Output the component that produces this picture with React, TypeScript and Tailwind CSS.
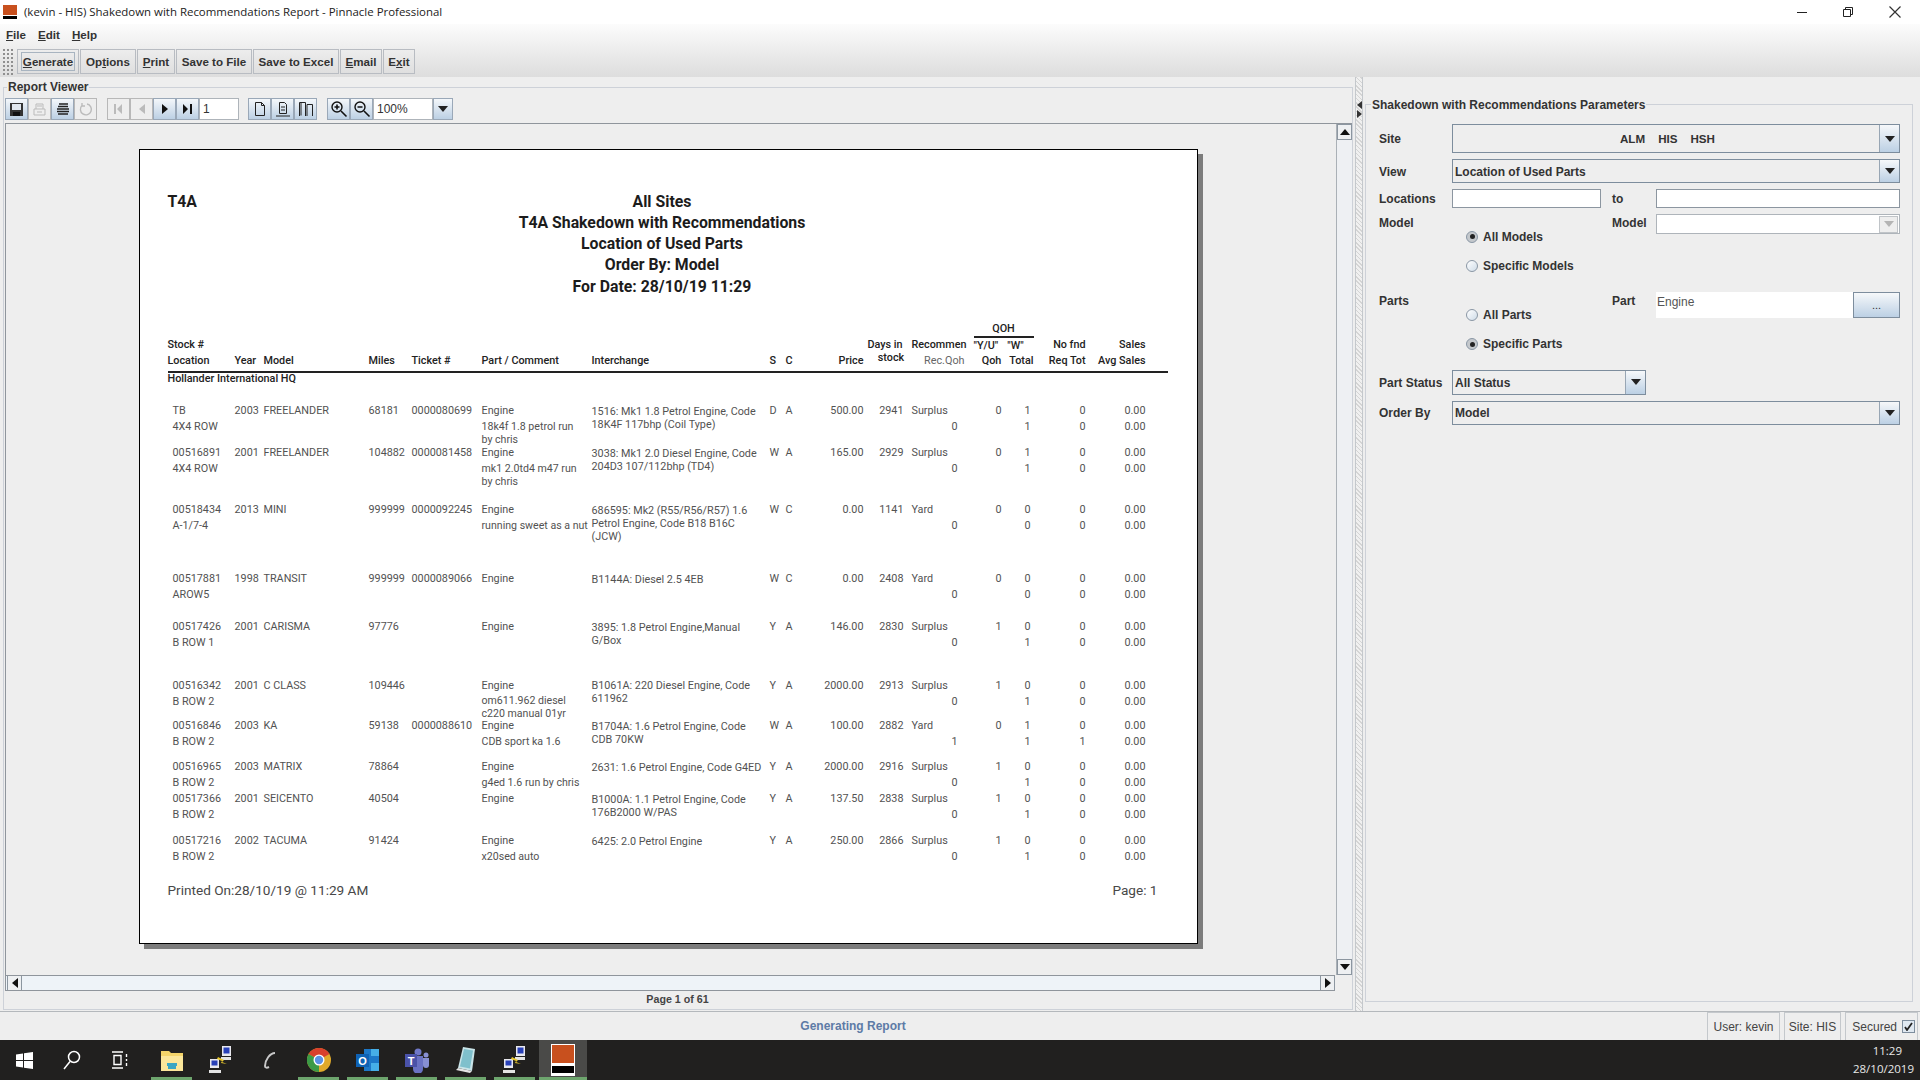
import React from "react";

type Row = {
    h: string;
    stock: string;
    loc: string;
    year: string;
    model: string;
    miles: string;
    ticket: string;
    comment: string[];
    inter: string[];
    s: string;
    c: string;
    price: string;
    days: string;
    rec: string;
    recQ: string;
    qoh: string;
    t1: string;
    t2: string;
    n1: string;
    n2: string;
};

const rows: Row[] = [
    { h: "h-[42px]", stock: "TB", loc: "4X4 ROW", year: "2003", model: "FREELANDER", miles: "68181", ticket: "0000080699", comment: ["18k4f 1.8 petrol run", "by chris"], inter: ["1516: Mk1 1.8 Petrol Engine, Code", "18K4F 117bhp (Coil Type)"], s: "D", c: "A", price: "500.00", days: "2941", rec: "Surplus", recQ: "0", qoh: "0", t1: "1", t2: "1", n1: "0", n2: "0" },
    { h: "h-[57px]", stock: "00516891", loc: "4X4 ROW", year: "2001", model: "FREELANDER", miles: "104882", ticket: "0000081458", comment: ["mk1 2.0td4 m47 run", "by chris"], inter: ["3038: Mk1 2.0 Diesel Engine, Code", "204D3 107/112bhp (TD4)"], s: "W", c: "A", price: "165.00", days: "2929", rec: "Surplus", recQ: "0", qoh: "0", t1: "1", t2: "1", n1: "0", n2: "0" },
    { h: "h-[69px]", stock: "00518434", loc: "A-1/7-4", year: "2013", model: "MINI", miles: "999999", ticket: "0000092245", comment: ["running sweet as a nut"], inter: ["686595: Mk2 (R55/R56/R57) 1.6", "Petrol Engine, Code B18 B16C", "(JCW)"], s: "W", c: "C", price: "0.00", days: "1141", rec: "Yard", recQ: "0", qoh: "0", t1: "0", t2: "0", n1: "0", n2: "0" },
    { h: "h-[48px]", stock: "00517881", loc: "AROW5", year: "1998", model: "TRANSIT", miles: "999999", ticket: "0000089066", comment: [], inter: ["B1144A: Diesel 2.5 4EB"], s: "W", c: "C", price: "0.00", days: "2408", rec: "Yard", recQ: "0", qoh: "0", t1: "0", t2: "0", n1: "0", n2: "0" },
    { h: "h-[58.5px]", stock: "00517426", loc: "B ROW 1", year: "2001", model: "CARISMA", miles: "97776", ticket: "", comment: [], inter: ["3895: 1.8 Petrol Engine,Manual", "G/Box"], s: "Y", c: "A", price: "146.00", days: "2830", rec: "Surplus", recQ: "0", qoh: "1", t1: "0", t2: "1", n1: "0", n2: "0" },
    { h: "h-[40.5px]", stock: "00516342", loc: "B ROW 2", year: "2001", model: "C CLASS", miles: "109446", ticket: "", comment: ["om611.962 diesel", "c220 manual 01yr"], inter: ["B1061A: 220 Diesel Engine, Code", "611962"], s: "Y", c: "A", price: "2000.00", days: "2913", rec: "Surplus", recQ: "0", qoh: "1", t1: "0", t2: "1", n1: "0", n2: "0" },
    { h: "h-[41px]", stock: "00516846", loc: "B ROW 2", year: "2003", model: "KA", miles: "59138", ticket: "0000088610", comment: ["CDB sport ka 1.6"], inter: ["B1704A: 1.6 Petrol Engine, Code", "CDB 70KW"], s: "W", c: "A", price: "100.00", days: "2882", rec: "Yard", recQ: "1", qoh: "0", t1: "1", t2: "1", n1: "0", n2: "1" },
    { h: "h-[32px]", stock: "00516965", loc: "B ROW 2", year: "2003", model: "MATRIX", miles: "78864", ticket: "", comment: ["g4ed 1.6 run by chris"], inter: ["2631: 1.6 Petrol Engine, Code G4ED"], s: "Y", c: "A", price: "2000.00", days: "2916", rec: "Surplus", recQ: "0", qoh: "1", t1: "0", t2: "1", n1: "0", n2: "0" },
    { h: "h-[42px]", stock: "00517366", loc: "B ROW 2", year: "2001", model: "SEICENTO", miles: "40504", ticket: "", comment: [], inter: ["B1000A: 1.1 Petrol Engine, Code", "176B2000 W/PAS"], s: "Y", c: "A", price: "137.50", days: "2838", rec: "Surplus", recQ: "0", qoh: "1", t1: "0", t2: "1", n1: "0", n2: "0" },
    { h: "h-[42px]", stock: "00517216", loc: "B ROW 2", year: "2002", model: "TACUMA", miles: "91424", ticket: "", comment: ["x20sed auto"], inter: ["6425: 2.0 Petrol Engine"], s: "Y", c: "A", price: "250.00", days: "2866", rec: "Surplus", recQ: "0", qoh: "1", t1: "0", t2: "1", n1: "0", n2: "0" },
];

const cols = "grid grid-cols-[67px_29px_105px_43px_70px_110px_178px_16px_26px_52px_42px_59px_37px_29px_55px_60px]";

const ReportRow = ({ r }: { r: Row }) => (
    <div className={`${cols} ${r.h} leading-[16px] text-[10.8px] text-[#525252]`}>
        <div className="pl-[5px]">
            <div>{r.stock}</div>
            <div>{r.loc}</div>
        </div>
        <div>{r.year}</div>
        <div>{r.model}</div>
        <div>{r.miles}</div>
        <div>{r.ticket}</div>
        <div>
            <div>Engine</div>
            <div className="mt-[0.5px] leading-[13px] text-[10.6px] whitespace-nowrap">
                {r.comment.map((c) => (
                    <div key={c}>{c}</div>
                ))}
            </div>
        </div>
        <div className="pt-[1.5px] leading-[13px] whitespace-nowrap">
            {r.inter.map((c) => (
                <div key={c}>{c}</div>
            ))}
        </div>
        <div>{r.s}</div>
        <div>{r.c}</div>
        <div className="text-right">{r.price}</div>
        <div className="text-right pr-[2px]">{r.days}</div>
        <div className="pl-[6px]">
            <div>{r.rec}</div>
            <div className="text-right pr-[7px]">{r.recQ}</div>
        </div>
        <div className="text-right">{r.qoh}</div>
        <div className="text-right">
            <div>{r.t1}</div>
            <div>{r.t2}</div>
        </div>
        <div className="text-right">
            <div>{r.n1}</div>
            <div>{r.n2}</div>
        </div>
        <div className="text-right">
            <div>0.00</div>
            <div>0.00</div>
        </div>
    </div>
);

const ReportHeader = () => (
    <div className={`${cols} h-[48px] items-end leading-[16px] text-[10.8px] font-medium text-[#222]`}>
        <div className="whitespace-nowrap">
            <div>Stock #</div>
            <div>Location</div>
        </div>
        <div>Year</div>
        <div>Model</div>
        <div>Miles</div>
        <div>Ticket #</div>
        <div>Part / Comment</div>
        <div>Interchange</div>
        <div>S</div>
        <div>C</div>
        <div className="text-right">Price</div>
        <div className="text-center leading-[12.5px] whitespace-nowrap pb-[5px] ml-px">
            <div>Days in</div>
            <div className="pl-[12px]">stock</div>
        </div>
        <div className="pl-[6px] whitespace-nowrap">
            <div>Recommen</div>
            <div className="text-right font-normal text-[#666]">Rec.Qoh</div>
        </div>
        <div className="col-span-2 ml-[9px] mr-[-3px]">
            <div className="text-center border-b-2 border-[#222] h-[17px] leading-[15px]">QOH</div>
            <div className="flex gap-[9px] leading-[15px] whitespace-nowrap">
                <span>"Y/U"</span>
                <span>"W"</span>
            </div>
            <div className="flex justify-end gap-[8px]">
                <span>Qoh</span>
                <span>Total</span>
            </div>
        </div>
        <div className="text-right whitespace-nowrap">
            <div>No fnd</div>
            <div>Req Tot</div>
        </div>
        <div className="text-right whitespace-nowrap">
            <div>Sales</div>
            <div>Avg Sales</div>
        </div>
    </div>
);

const Page = () => (
    <div className="ml-[132.5px] mt-[25px] w-[1059.5px] h-[795px] bg-white border border-black shadow-[5px_5px_0_#7c7c7c] pl-[28px] pt-[40.5px] font-['Roboto',sans-serif]">
        <div className="w-[989px] grid grid-cols-[1fr_auto_1fr] font-bold text-[15.8px] leading-[21.3px] text-[#1c1c1c]">
            <div>T4A</div>
            <div className="text-center">
                <div>All Sites</div>
                <div>T4A Shakedown with Recommendations</div>
                <div>Location of Used Parts</div>
                <div>Order By: Model</div>
                <div>For Date: 28/10/19 11:29</div>
            </div>
            <div />
        </div>
        <div className="mt-[24.5px] w-[1000px]">
            <ReportHeader />
            <div className="mt-[2px] h-[2px] bg-[#222]" />
            <div className="-mt-px h-[13px] leading-[13px] text-[10.8px] font-medium text-[#222]">Hollander International HQ</div>
            <div className="h-[18px]" />
            {rows.map((r) => (
                <ReportRow key={r.stock} r={r} />
            ))}
        </div>
        <div className="mt-[7px] w-[990px] flex justify-between text-[13.6px] leading-[17px] text-[#484848]">
            <span>Printed On:28/10/19 @ 11:29 AM</span>
            <span>Page: 1</span>
        </div>
    </div>
);

const ArrowDown = ({ muted }: { muted?: boolean }) => (
    <svg width="10" height="6" viewBox="0 0 10 6">
        <path d="M0 0h10L5 6z" fill={muted ? "#b4b4b4" : "#222"} />
    </svg>
);

const ToolBtn = ({ off, children }: { off?: boolean; children: React.ReactNode }) => (
    <div
        className={`w-[23px] h-[22px] flex items-center justify-center border ${off ? "border-[#b8b8b8] bg-[#eeeeee]" : "border-[#9aa8b8] bg-gradient-to-b from-[#f4f7fa] to-[#bcd0e4]"}`}
    >
        {children}
    </div>
);

const ReportToolbar = () => (
    <div className="flex h-[22px] pl-[1px]">
        <ToolBtn>
            <svg width="15" height="15" viewBox="0 0 15 15">
                <path d="M1 1h13v13H1z" fill="#333" />
                <path d="M3 2h9v6H3z" fill="#dfe6ee" />
                <path d="M4 10h7v4H4z" fill="#111" />
            </svg>
        </ToolBtn>
        <ToolBtn off>
            <svg width="15" height="15" viewBox="0 0 15 15" fill="none" stroke="#bbb">
                <path d="M4 7V2h7v5M2 7h11v6H2zM5 4h5M5 10h5" />
            </svg>
        </ToolBtn>
        <ToolBtn>
            <svg width="16" height="15" viewBox="0 0 16 15" fill="none" stroke="#222" strokeWidth="1.4">
                <path d="M4 2h9M3 4.5h10M2 7h12M2 9.5h12M3 12h10" />
            </svg>
        </ToolBtn>
        <ToolBtn off>
            <svg width="15" height="15" viewBox="0 0 15 15" fill="none" stroke="#bbb" strokeWidth="1.4">
                <path d="M9 2a5.5 5.5 0 1 1-5 1.5M4 1v3h3" />
            </svg>
        </ToolBtn>
        <div className="w-[10px]" />
        <ToolBtn off>
            <svg width="9" height="10" viewBox="0 0 9 10" fill="#bbb">
                <path d="M0 0h2v10H0zM8 0v10L3 5z" />
            </svg>
        </ToolBtn>
        <ToolBtn off>
            <svg width="6" height="10" viewBox="0 0 6 10" fill="#bbb">
                <path d="M6 0v10L0 5z" />
            </svg>
        </ToolBtn>
        <ToolBtn>
            <svg width="6" height="10" viewBox="0 0 6 10" fill="#111">
                <path d="M0 0v10l6-5z" />
            </svg>
        </ToolBtn>
        <ToolBtn>
            <svg width="9" height="10" viewBox="0 0 9 10" fill="#111">
                <path d="M0 0v10l5-5zM7 0h2v10H7z" />
            </svg>
        </ToolBtn>
        <div className="w-[40px] bg-white border border-[#aeb4ba] text-[12px] leading-[20px] pl-[3px] text-[#333] font-['Liberation_Sans',sans-serif]">1</div>
        <div className="w-[9px]" />
        <ToolBtn>
            <svg width="12" height="16" viewBox="0 0 12 16" fill="none" stroke="#222">
                <path d="M1.5 1.5h6l3 3v10h-9zM7.5 1.5v3h3" />
            </svg>
        </ToolBtn>
        <ToolBtn>
            <svg width="14" height="16" viewBox="0 0 14 16" fill="none" stroke="#222">
                <path d="M3.5 1.5h5l2 2v9h-7zM0 15h14M5 6h4M5 9h4" />
            </svg>
        </ToolBtn>
        <ToolBtn>
            <svg width="16" height="16" viewBox="0 0 16 16" fill="none" stroke="#222">
                <path d="M1.5 15V1.5h6V15M9 15V3.5h5.5V15M3 1.5v13" />
            </svg>
        </ToolBtn>
        <div className="w-[10px]" />
        <ToolBtn>
            <svg width="18" height="18" viewBox="0 0 18 18" fill="none" stroke="#111" strokeWidth="1.4">
                <circle cx="7" cy="7" r="5" />
                <path d="M11 11l5.5 5.5M4.5 7h5M7 4.5v5" strokeWidth="1.6" />
            </svg>
        </ToolBtn>
        <ToolBtn>
            <svg width="18" height="18" viewBox="0 0 18 18" fill="none" stroke="#111" strokeWidth="1.4">
                <circle cx="7" cy="7" r="5" />
                <path d="M11 11l5.5 5.5M4.5 7h5" strokeWidth="1.6" />
            </svg>
        </ToolBtn>
        <div className="w-[60px] bg-white border border-[#aeb4ba] text-[12px] leading-[20px] pl-[3px] text-[#333] font-['Liberation_Sans',sans-serif]">100%</div>
        <div className="w-[20px] flex items-center justify-center border border-[#9aa8b8] bg-gradient-to-b from-[#f4f7fa] to-[#bcd0e4]">
            <ArrowDown />
        </div>
    </div>
);

const ScrollBtn = ({ dir, className }: { dir: "up" | "down" | "left" | "right"; className: string }) => {
    const paths = { up: "M0 6h10L5 0z", down: "M0 0h10L5 6z", left: "M6 0v10L0 5z", right: "M0 0v10l6-5z" };
    const vertical = dir === "up" || dir === "down";
    return (
        <div className={`flex items-center justify-center border border-[#8c96a0] bg-[#eef0f2] ${className}`}>
            <svg width={vertical ? 10 : 6} height={vertical ? 6 : 10} viewBox={vertical ? "0 0 10 6" : "0 0 6 10"}>
                <path d={paths[dir]} fill="#111" />
            </svg>
        </div>
    );
};

const ReportViewer = () => (
    <div className="relative mt-[10px] mb-[1px] ml-[3px] w-[1350px] border border-[#cdd1d8] flex flex-col">
        <span className="absolute left-[3px] -top-[8px] bg-[#eeeeee] px-px text-[12px] leading-[15px] font-bold text-[#333] font-['Liberation_Sans',sans-serif]">
            Report Viewer
        </span>
        <div className="pt-[10px]">
            <ReportToolbar />
        </div>
        <div className="mt-[3px] flex flex-col h-[868px] ml-px border-t border-l border-[#8f959c]">
            <div className="flex flex-1 min-h-0">
                <div className="flex-1 overflow-hidden">
                    <Page />
                </div>
                <div className="w-[16px] flex flex-col border-l border-[#aab0b6] bg-[#eef0f3]">
                    <ScrollBtn dir="up" className="h-[16px]" />
                    <div className="flex-1" />
                    <ScrollBtn dir="down" className="h-[16px]" />
                </div>
            </div>
            <div className="flex h-[16px]">
                <div className="w-[1329px] flex pl-[1px] border-y border-[#8f959c] bg-[#eef3f8]">
                    <ScrollBtn dir="left" className="w-[15px] border-y-0" />
                    <div className="flex-1" />
                    <ScrollBtn dir="right" className="w-[15px] border-y-0" />
                </div>
            </div>
        </div>
        <div className="flex-1 flex items-center justify-center pr-[1px] pb-px text-[10.7px] font-bold text-[#444] font-['Liberation_Sans',sans-serif]">
            Page 1 of 61
        </div>
    </div>
);

const Combo = ({ className, text, center }: { className: string; text?: string; center?: boolean }) => (
    <div className={`flex border border-[#7d8d9d] bg-[#eeeeee] ${className}`}>
        <div className={`flex-1 flex items-center pl-[2px] pt-px text-[#333] font-bold ${center ? "pl-[167px] gap-[13px] text-[11.6px]" : "text-[12px]"}`}>
            {center ? (
                <>
                    <span>ALM</span>
                    <span>HIS</span>
                    <span>HSH</span>
                </>
            ) : (
                text
            )}
        </div>
        <div className="w-[20px] flex items-center justify-center border-l border-[#98a6b4] bg-gradient-to-b from-[#f6f8fa] to-[#bcd0e4]">
            <ArrowDown />
        </div>
    </div>
);

const Radio = ({ on, label }: { on?: boolean; label: string }) => (
    <div className="h-[29px] flex items-center pl-[14px] gap-[5px]">
        <div className={`w-[12px] h-[12px] rounded-full border border-[#8a97a5] flex items-center justify-center ${on ? "bg-[#c4c8cc]" : "bg-gradient-to-br from-white to-[#cfdce8]"}`}>
            {on && <div className="w-[5px] h-[5px] rounded-full bg-[#222]" />}
        </div>
        <span className="font-bold text-[12px] text-[#333]">{label}</span>
    </div>
);

const Label = ({ children, className }: { children: React.ReactNode; className: string }) => (
    <div className={`font-bold text-[12px] leading-[16px] pt-px text-[#333] ${className}`}>{children}</div>
);

const ParamsPanel = () => (
    <div className="relative mt-[27px] mb-[9px] ml-[2px] w-[548px] border border-[#cdd1d8] pl-[13px] pt-[19px] font-['Liberation_Sans',sans-serif]">
        <span className="absolute left-[5px] -top-[7px] bg-[#eeeeee] px-px text-[12px] leading-[15px] font-bold text-[#333]">
            Shakedown with Recommendations Parameters
        </span>
        <div className="flex items-center h-[29px]">
            <Label className="w-[73px]">Site</Label>
            <Combo className="w-[448px] h-[29px]" center />
        </div>
        <div className="flex items-center h-[24px] mt-[6px]">
            <Label className="w-[73px]">View</Label>
            <Combo className="w-[448px] h-[24px]" text="Location of Used Parts" />
        </div>
        <div className="flex items-center h-[19px] mt-[6px]">
            <Label className="w-[73px]">Locations</Label>
            <div className="w-[149px] h-[19px] bg-white border border-[#8c96a0]" />
            <Label className="w-[55px] pl-[11px]">to</Label>
            <div className="w-[244px] h-[19px] bg-white border border-[#8c96a0]" />
        </div>
        <div className="flex mt-[6px]">
            <Label className="w-[73px]">Model</Label>
            <div className="w-[160px] pt-[8px]">
                <Radio on label="All Models" />
                <Radio label="Specific Models" />
            </div>
            <Label className="w-[44px]">Model</Label>
            <div className="w-[244px] h-[20px] bg-white border border-[#aeb4ba] flex justify-end items-center pr-[1px]">
                <div className="w-[19px] h-[17px] border border-[#c0c4c8] bg-[#eeeeee] flex items-center justify-center">
                    <ArrowDown muted />
                </div>
            </div>
        </div>
        <div className="flex mt-[12px]">
            <Label className="w-[73px]">Parts</Label>
            <div className="w-[160px] pt-[8.5px]">
                <Radio label="All Parts" />
                <Radio on label="Specific Parts" />
            </div>
            <Label className="w-[44px]">Part</Label>
            <div className="flex h-[26px] w-[244px]">
                <div className="flex-1 bg-white text-[12px] leading-[20px] pl-px text-[#555]">Engine</div>
                <div className="w-[47px] border border-[#7d8d9d] bg-gradient-to-b from-[#f6f8fa] to-[#bcd0e4] flex items-center justify-center text-[11px] text-[#333]">
                    ...
                </div>
            </div>
        </div>
        <div className="flex items-center h-[25px] mt-[11px]">
            <Label className="w-[73px]">Part Status</Label>
            <Combo className="w-[194px] h-[25px]" text="All Status" />
        </div>
        <div className="flex items-center h-[24px] mt-[6px]">
            <Label className="w-[73px]">Order By</Label>
            <Combo className="w-[448px] h-[24px]" text="Model" />
        </div>
    </div>
);

const MenuItem = ({ first, rest }: { first: string; rest: string }) => (
    <span>
        <span className="underline">{first}</span>
        {rest}
    </span>
);

const BarBtn = ({ className, pre, mark, post, focus }: { className: string; pre?: string; mark: string; post: string; focus?: boolean }) => (
    <div className={`h-[25px] flex items-center justify-center border border-[#b8bcc2] ${className}`}>
        <span className={focus ? "border border-[#a8b4c0] px-[1px] leading-[17px]" : ""}>
            {pre}
            <span className="underline">{mark}</span>
            {post}
        </span>
    </div>
);

const TopChrome = () => (
    <>
        <div className="h-[24px] bg-white flex items-center relative font-['Open_Sans',sans-serif] text-[11.45px] text-[#222]">
            <div className="ml-[3px] w-[14px] h-[14px] flex flex-col">
                <div className="h-[10px] bg-[#c8501e]" />
                <div className="h-[1px]" />
                <div className="h-[3px] bg-black" />
            </div>
            <span className="ml-[7px]">(kevin - HIS) Shakedown with Recommendations Report - Pinnacle Professional</span>
            <div className="ml-auto flex items-center gap-[36px] pr-[19px]">
                <svg width="10" height="10" viewBox="0 0 10 10" stroke="#222" fill="none">
                    <path d="M0 5.5h10" />
                </svg>
                <svg width="10" height="10" viewBox="0 0 10 10" stroke="#222" fill="none">
                    <path d="M.5 2.5h7v7h-7zM2.5 2.5v-2h7v7h-2" />
                </svg>
                <svg width="12" height="12" viewBox="0 0 12 12" stroke="#333" fill="none" strokeWidth="1.2">
                    <path d="M.5.5l11 11M11.5.5l-11 11" />
                </svg>
            </div>
        </div>
        <div className="h-[53px] bg-gradient-to-b from-[#fcfcfc] to-[#dddddd] font-['Liberation_Sans',sans-serif] text-[11.6px] font-bold text-[#333]">
            <div className="h-[21px] flex items-center pt-px gap-[12px] pl-[6px]">
                <MenuItem first="F" rest="ile" />
                <MenuItem first="E" rest="dit" />
                <MenuItem first="H" rest="elp" />
            </div>
            <div className="flex items-center mt-[3px]">
                <div className="w-[12px] h-[27px] ml-[2px] mr-[3px] bg-[radial-gradient(#8f8f8f_1px,transparent_1px)] bg-[length:4px_4px]" />
                <BarBtn className="w-[62px]" mark="G" post="enerate" focus />
                <div className="w-[1px]" />
                <BarBtn className="w-[56px]" pre="Op" mark="t" post="ions" />
                <div className="w-[1px]" />
                <BarBtn className="w-[38px]" mark="P" post="rint" />
                <div className="w-[1px]" />
                <BarBtn className="w-[76px]" pre="Save to File" mark="" post="" />
                <div className="w-[1px]" />
                <BarBtn className="w-[86px]" pre="Save to Excel" mark="" post="" />
                <div className="w-[1px]" />
                <BarBtn className="w-[42px]" mark="E" post="mail" />
                <div className="w-[1px]" />
                <BarBtn className="w-[32px]" pre="E" mark="x" post="it" />
            </div>
        </div>
    </>
);

const StatusCell = ({ className, children }: { className: string; children: React.ReactNode }) => (
    <div className={`h-full flex items-center justify-center border-x border-t border-[#c4c8cc] ${className}`}>{children}</div>
);

const StatusBar = () => (
    <div className="h-[29px] flex border-t border-[#b4b8bc] font-['Liberation_Sans',sans-serif] text-[12px] text-[#444]">
        <div className="w-[1706px] flex items-center justify-center text-[#5d7ba6] font-bold pb-[1px]">Generating Report</div>
        <StatusCell className="w-[73px] ml-[1px]">User: kevin</StatusCell>
        <StatusCell className="w-[57px] ml-[4px]">Site: HIS</StatusCell>
        <StatusCell className="w-[73px] ml-[4px] gap-[5px] justify-end pr-[2px]">
            Secured
            <span className="w-[13px] h-[13px] border border-[#7d8d9d] bg-[#dfe8f1] flex items-center justify-center">
                <svg width="9" height="9" viewBox="0 0 9 9" fill="none" stroke="#222" strokeWidth="1.8">
                    <path d="M1 5l2 3 5-7" />
                </svg>
            </span>
        </StatusCell>
        <div className="w-[2px]" />
    </div>
);

const NetIcon = () => (
    <svg width="24" height="30" viewBox="0 0 24 30">
        <path d="M13 1h9v10h-9z" fill="#e8e8ee" />
        <path d="M14.5 2.5h6v6h-6z" fill="#2840b8" />
        <path d="M1 14h9v9H1z" fill="#e8e8ee" />
        <path d="M2.5 15.5h6v5h-6z" fill="#2840b8" />
        <path d="M0 25h12v3H0zM12 12h10v3H12z" fill="#e4e4e4" />
        <path d="M9 12l6 3-2 2 5 2-6-1 1-2-5-2z" fill="#e8c62c" />
    </svg>
);

const TaskSlot = ({ line, active, children }: { line?: boolean; active?: boolean; children: React.ReactNode }) => (
    <div className={`relative h-full flex items-center justify-center ${active ? "w-[48px] bg-[#4a4a48]" : "w-[49px]"}`}>
        {children}
        {line && <div className="absolute bottom-0 inset-x-[4px] h-[3px] bg-[#6da56d]" />}
        {active && <div className="absolute bottom-0 inset-x-0 h-[3px] bg-[#6da56d]" />}
    </div>
);

const Taskbar = () => (
    <div className="h-[40px] bg-[#21201f] flex items-center text-white">
        <div className="w-[48px] h-full flex items-center justify-center">
            <svg width="17" height="17" viewBox="0 0 17 17" fill="#fff">
                <path d="M0 2.5l7-1v6.5H0zM8 1.3L17 0v8H8zM0 9h7v6.5l-7-1zM8 9h9v8l-9-1.3z" />
            </svg>
        </div>
        <div className="w-[48px] h-full flex items-center justify-center">
            <svg width="18" height="20" viewBox="0 0 18 20" fill="none" stroke="#fff" strokeWidth="1.5">
                <circle cx="11" cy="7" r="5.5" />
                <path d="M7 11.5L1 19" />
            </svg>
        </div>
        <div className="w-[48px] h-full flex items-center justify-center">
            <svg width="16" height="20" viewBox="0 0 16 20" fill="none" stroke="#fff" strokeWidth="1.4">
                <path d="M0 2h11M0 18h11M2 5.5h7v9H2zM14.5 4v3M14.5 9v2M14.5 13v3" />
            </svg>
        </div>
        <div className="ml-[3px] flex h-full">
            <TaskSlot line>
                <svg width="24" height="24" viewBox="0 0 24 24">
                    <path d="M1 3h8l2 2h12v18H1z" fill="#f4d46a" />
                    <path d="M1 8h22v15H1z" fill="#fbe69a" />
                    <path d="M7 15h10v3h-1v3H8v-3H7z" fill="#3aa6c4" />
                </svg>
            </TaskSlot>
            <TaskSlot>
                <NetIcon />
            </TaskSlot>
            <TaskSlot>
                <svg width="16" height="18" viewBox="0 0 16 18" fill="none" stroke="#c8c8c8" strokeWidth="2">
                    <path d="M13 2C8 2 3 9 3 15c0 2 2 2 4 1" />
                </svg>
            </TaskSlot>
            <TaskSlot line>
                <svg width="24" height="24" viewBox="0 0 24 24">
                    <circle cx="12" cy="12" r="12" fill="#e0a92a" />
                    <path d="M12 12L1.6 6A12 12 0 0 1 22.4 6z" fill="#d8402c" />
                    <path d="M12 12L1.6 6A12 12 0 0 0 12 24z" fill="#3b9a46" />
                    <circle cx="12" cy="12" r="5.5" fill="#fff" />
                    <circle cx="12" cy="12" r="4.2" fill="#5b92e4" />
                </svg>
            </TaskSlot>
            <TaskSlot line>
                <svg width="26" height="26" viewBox="0 0 26 26">
                    <path d="M9 2h15v22H9z" fill="#1d78c8" />
                    <path d="M16 2h8v7h-8zM16 16h8v8h-8z" fill="#46aee6" />
                    <path d="M1 7h13v13H1z" fill="#0f62b4" />
                    <text x="7.5" y="17.5" textAnchor="middle" fontSize="11" fontWeight="700" fill="#fff" fontFamily="Liberation Sans">O</text>
                </svg>
            </TaskSlot>
            <TaskSlot line>
                <svg width="26" height="26" viewBox="0 0 26 26">
                    <circle cx="14" cy="5" r="3.5" fill="#7078c8" />
                    <circle cx="22" cy="8" r="2.5" fill="#8890d4" />
                    <path d="M9 9h10v13a5 5 0 0 1-10 0z" fill="#6a72c4" />
                    <path d="M19 11h6v7a3 3 0 0 1-6 0z" fill="#8890d4" />
                    <path d="M1 7h12v13H1z" fill="#4a52a8" />
                    <text x="7" y="17.5" textAnchor="middle" fontSize="11" fontWeight="700" fill="#fff" fontFamily="Liberation Sans">T</text>
                </svg>
            </TaskSlot>
            <TaskSlot line>
                <svg width="24" height="28" viewBox="0 0 24 28">
                    <path d="M9 1l12 2-3 22-14-3z" fill="#c9e4e8" />
                    <path d="M10 3l9 1.5-3 18-10-2z" fill="#7fc0cc" />
                    <path d="M4 22l14 3-2 2-14-3z" fill="#e4e4e4" />
                </svg>
            </TaskSlot>
            <TaskSlot line>
                <NetIcon />
            </TaskSlot>
            <TaskSlot active>
                <div className="w-[24px] h-[32px] bg-white p-px flex flex-col">
                    <div className="flex-1 bg-[#c8501e]" />
                    <div className="h-[3px]" />
                    <div className="h-[7px] bg-black" />
                    <div className="h-[2px]" />
                </div>
            </TaskSlot>
        </div>
        <div className="ml-auto w-[60px] pr-[6px] text-right text-[12px] leading-[18px] font-['Open_Sans',sans-serif] text-[#e8e8e8]">
            <div className="pr-[12px] text-[11.5px]">11:29</div>
            <div className="-ml-[10px] whitespace-nowrap text-[11.5px]">28/10/2019</div>
        </div>
    </div>
);

const App = () => {
    return (
        <div className="w-[1920px] h-[1080px] flex flex-col overflow-hidden bg-[#eeeeee]">
            <TopChrome />
            <div className="flex-1 min-h-0 flex">
                <ReportViewer />
                <div className="ml-[2px] w-[8px] border-x border-[#c4c8cc] bg-[repeating-linear-gradient(45deg,#d4d4d4_0_1px,#f0f0f0_1px_3px)] flex flex-col items-center pt-[24px] gap-[1px]">
                    <svg width="5" height="8" viewBox="0 0 5 8">
                        <path d="M5 0v8L0 4z" fill="#333" />
                    </svg>
                    <svg width="5" height="8" viewBox="0 0 5 8">
                        <path d="M0 0v8l5-4z" fill="#333" />
                    </svg>
                </div>
                <ParamsPanel />
            </div>
            <StatusBar />
            <Taskbar />
        </div>
    );
};

export default App;
